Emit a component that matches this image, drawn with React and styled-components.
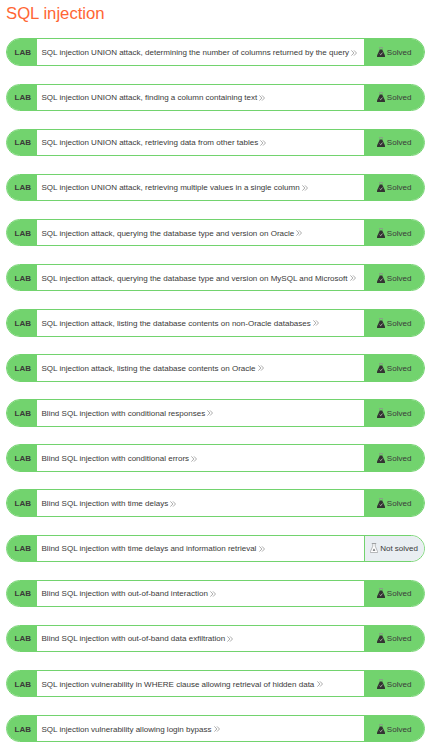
import React from "react";
import styled, { createGlobalStyle } from "styled-components";

const GlobalStyle = createGlobalStyle`
  *, *::before, *::after { box-sizing: border-box; }
  body {
    margin: 0;
    background: #fff;
    color: #3a3a39;
    font-family: "Liberation Sans", Arial, sans-serif;
  }
`;

const Page = styled.main`
  height: 751px;
  padding: 3px 9px 0 6px;
  overflow: hidden;
`;

const Title = styled.h1`
  margin: 0 0 14.485px;
  height: 21px;
  line-height: 21px;
  font-size: 16.7px;
  font-weight: 400;
  color: #ff6633;
`;

const LabList = styled.div`
  display: flex;
  flex-direction: column;
  gap: 17.595px;
`;

const LabRow = styled.div`
  display: flex;
  flex: none;
  height: 27.5px;
  border: 1px solid #72d36e;
  border-radius: 14px;
  background: #fff;
  overflow: hidden;
  font-size: 8.02px;
  line-height: 12px;
`;

const Tag = styled.span`
  display: flex;
  align-items: center;
  flex: none;
  width: 30px;
  padding: 1.94px 0 0 7.5px;
  background: #72d36e;
  font-weight: 700;
`;

const LabLink = styled.a`
  display: flex;
  align-items: center;
  flex: 1;
  padding: 1.94px 0 0 4.5px;
  white-space: nowrap;
`;

const Status = styled.span`
  display: flex;
  align-items: center;
  justify-content: center;
  flex: none;
  width: 60px;
  gap: 2px;
  padding: 1.94px 0.8px 0 0;
  white-space: nowrap;
  border-left: 1px solid #72d36e;
  background: ${(p) => (p.$solved ? "#72d36e" : "#e9eef2")};
`;

const ChevronIcon = styled.svg`
  width: 6px;
  height: 6px;
  margin: 0 0 1px 2.2px;
  flex: none;
`;

const FlaskIcon = styled.svg`
  width: 8px;
  height: 10px;
  margin-bottom: 2px;
  flex: none;
`;

const Chevrons = () => (
  <ChevronIcon viewBox="0 0 6 6" fill="none" stroke="#888" strokeWidth="0.7">
    <path d="M0.4 0.4 2.9 3 0.4 5.6M3 0.4 5.5 3 3 5.6" />
  </ChevronIcon>
);

const Flask = ({ solved }) =>
  solved ? (
    <FlaskIcon viewBox="0 0 8 10">
      <path d="M2 .6h4" stroke="#8a9d8a" strokeWidth="1" />
      <path d="M2.6 1v2M5.4 1v2" stroke="#69b666" strokeWidth=".6" />
      <path d="M2.8 2.6h2.4L8 8.6V10H0V8.6z" fill="#333332" />
      <path d="m2.7 6.7 1 .9 1.8-1.8" fill="none" stroke="#d0dacf" strokeWidth=".8" />
    </FlaskIcon>
  ) : (
    <FlaskIcon viewBox="0 0 8 10" fill="none" stroke="#8b8d8e">
      <path d="M1.8 .5h4.4" strokeWidth=".8" />
      <path d="M2.8 1v2.2L.4 8.6v.9h7.2v-.9L5.2 3.2V1" strokeWidth=".6" fill="#fff" />
      <path d="M2.6 7.8 4 5.4l1.4 2.4z" fill="#66696b" stroke="none" />
    </FlaskIcon>
  );

const labs = [
  "SQL injection UNION attack, determining the number of columns returned by the query",
  "SQL injection UNION attack, finding a column containing text",
  "SQL injection UNION attack, retrieving data from other tables",
  "SQL injection UNION attack, retrieving multiple values in a single column",
  "SQL injection attack, querying the database type and version on Oracle",
  "SQL injection attack, querying the database type and version on MySQL and Microsoft",
  "SQL injection attack, listing the database contents on non-Oracle databases",
  "SQL injection attack, listing the database contents on Oracle",
  "Blind SQL injection with conditional responses",
  "Blind SQL injection with conditional errors",
  "Blind SQL injection with time delays",
  "Blind SQL injection with time delays and information retrieval",
  "Blind SQL injection with out-of-band interaction",
  "Blind SQL injection with out-of-band data exfiltration",
  "SQL injection vulnerability in WHERE clause allowing retrieval of hidden data",
  "SQL injection vulnerability allowing login bypass",
].map((title, i) => ({ title, solved: i !== 11 }));

export default function App() {
  return (
    <Page>
      <GlobalStyle />
      <Title>SQL injection</Title>
      <LabList>
        {labs.map(({ title, solved }) => (
          <LabRow key={title}>
            <Tag>LAB</Tag>
            <LabLink>
              {title}
              <Chevrons />
            </LabLink>
            <Status $solved={solved}>
              <Flask solved={solved} />
              {solved ? "Solved" : "Not solved"}
            </Status>
          </LabRow>
        ))}
      </LabList>
    </Page>
  );
}
